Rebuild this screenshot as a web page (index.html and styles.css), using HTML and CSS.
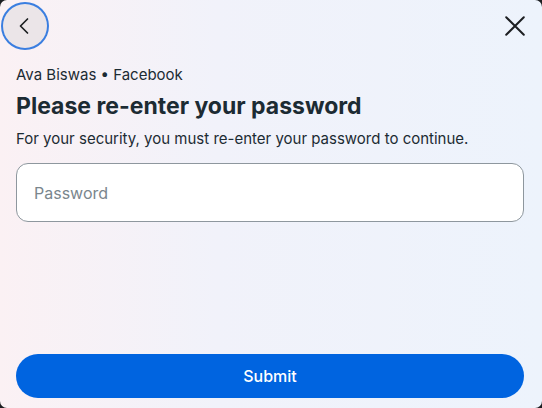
FILE: index.html
```html
<!DOCTYPE html>
<html lang="en">
<head>
  <meta charset="UTF-8" />
  <meta name="viewport" content="width=device-width, initial-scale=1.0"/>
  <title>Re-enter password</title>
  <link rel="stylesheet" href="styles.css">
</head>
<body>
  <div class="dialog">
    <div class="topbar">
      <button class="icon-btn back" aria-label="Back">
        <svg width="20" height="20" viewBox="0 0 20 20"><path d="M12.5 3 5.5 10l7 7" fill="none" stroke="#1c1e21" stroke-width="1.7" stroke-linecap="round" stroke-linejoin="round"/></svg>
      </button>
      <button class="icon-btn close" aria-label="Close">
        <svg width="22" height="22" viewBox="0 0 20 20"><path d="M2 2l16 16M18 2 2 18" fill="none" stroke="#1c1e21" stroke-width="1.8" stroke-linecap="round"/></svg>
      </button>
    </div>

    <div class="content">
      <p class="account">Ava Biswas • Facebook</p>
      <h1>Please re-enter your password</h1>
      <p class="desc">For your security, you must re-enter your password to continue.</p>
      <input class="field" type="password" placeholder="Password" />
    </div>

    <div class="footer">
      <button class="submit">Submit</button>
    </div>
  </div>
</body>
</html>
```

FILE: styles.css
```css
body {
  margin: 0;
  background: #1c1e21;
  font-family: Inter, "Noto Sans", sans-serif;
  color: #1c2b33;
}
.dialog {
  height: 408px;
  box-sizing: border-box;
  border-radius: 7px;
  background: linear-gradient(90deg, #fbf1f4 0%, #f1f2fa 40%, #edf3fc 100%);
  display: flex;
  flex-direction: column;
  padding: 0 18px 10px 16px;
}
.topbar {
  display: flex;
  justify-content: space-between;
  align-items: center;
  height: 52px;
  margin-left: -14px;
}
.icon-btn {
  border: none;
  background: none;
  padding: 0;
  display: flex;
  align-items: center;
  justify-content: center;
  cursor: pointer;
}
.back {
  width: 44px;
  height: 44px;
  border-radius: 50%;
  background: #ebe5e8;
  box-shadow: 0 0 0 2px #3a7ee0;
  margin-left: 1px;
}
.close {
  width: 24px;
  height: 24px;
  margin-right: -3px;
}
.content {
  flex: 1;
}
.account {
  margin: 13px 0 0;
  font-size: 15px;
  line-height: 20px;
  color: #1c2b33;
}
h1 {
  margin: 5px 0 0;
  font-size: 23px;
  line-height: 32px;
  font-weight: 700;
  color: #1c2b33;
}
.desc {
  margin: 6px 0 0;
  font-size: 15px;
  line-height: 22px;
  color: #1c2b33;
}
.field {
  display: block;
  box-sizing: border-box;
  width: 508px;
  height: 59px;
  margin-top: 13px;
  padding: 0 17px;
  border: 1px solid #8e979e;
  border-radius: 12px;
  background: #fff;
  font-family: inherit;
  font-size: 16px;
  outline: none;
}
.field::placeholder {
  color: #7a868d;
}
.footer {
  display: flex;
}
.submit {
  width: 508px;
  height: 44px;
  border: none;
  border-radius: 22px;
  background: #0064e0;
  color: #fff;
  font-family: inherit;
  font-size: 16px;
  font-weight: 500;
  cursor: pointer;
}
```
